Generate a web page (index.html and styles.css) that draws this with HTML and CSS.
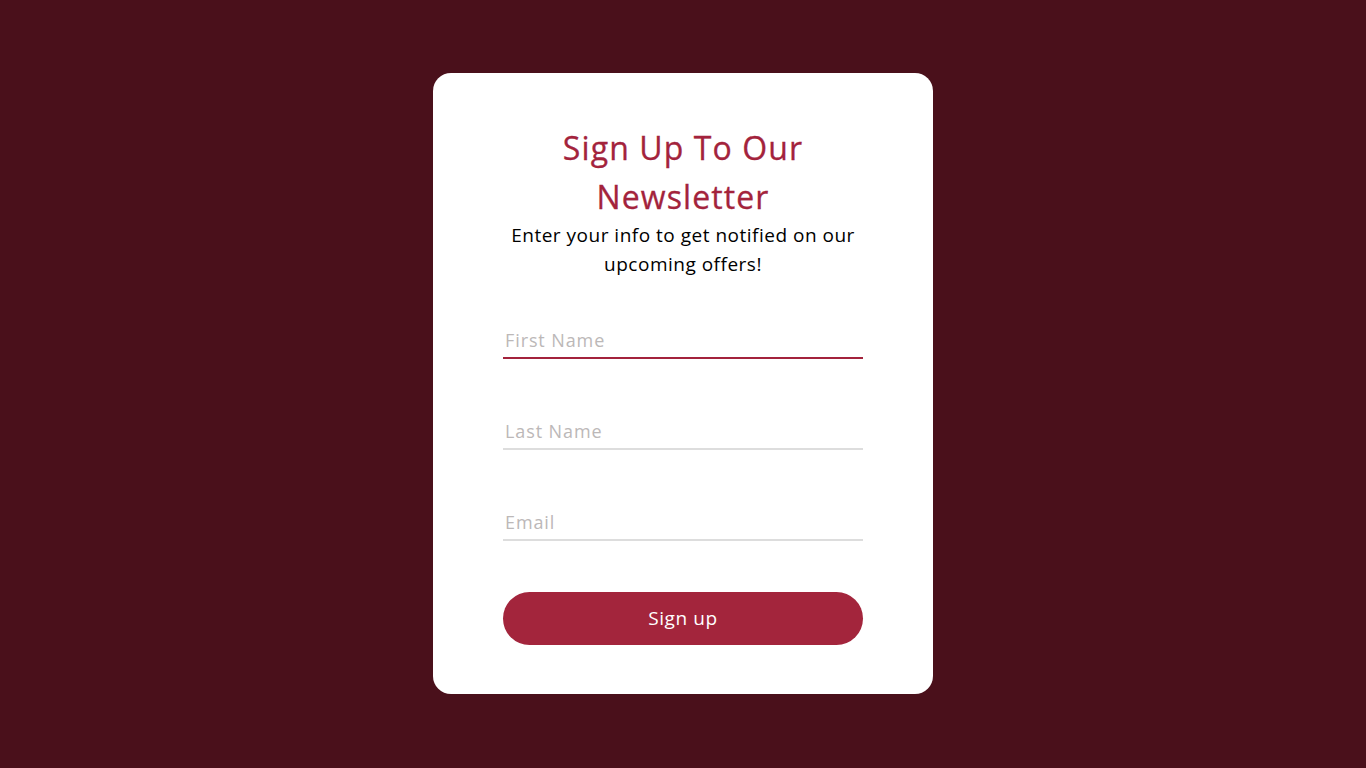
FILE: index.html
```html
<!DOCTYPE html>
<html lang="en">
<head>
	<meta charset="UTF-8">
	<title>Newsletter</title>
	<link rel="stylesheet" href="styles.css">
</head>
<body>
    <div class="card">
        <h1 class="title">Sign Up To Our<br>Newsletter</h1>
        <p class="sub">Enter your info to get notified on our<br>upcoming offers!</p>
        <form class="form">
            <input class="field active" type="text" placeholder="First Name">
            <input class="field" type="text" placeholder="Last Name">
            <input class="field" type="email" placeholder="Email">
            <button class="btn" type="button">Sign up</button>
        </form>
    </div>
</body>
</html>
```

FILE: styles.css
```css
*{
    margin: 0px;
    padding: 0px;
    box-sizing: border-box;
}
html{height:100%;}
body{
    width: 100%;
    height: 100%;
    background: #4a101b;
    font-family: "Open Sans", "DejaVu Sans", sans-serif;
    display: flex;
    justify-content: center;
    align-items: flex-start;
    padding-top: 73px;
}
.card{
    width: 500px;
    background: #fff;
    border-radius: 18px;
    padding: 50px 70px 49px;
    text-align: center;
}
.title{
    color: #a3233c;
    font-size: 32px;
    font-weight: 500;
    line-height: 49px;
    letter-spacing: 1.1px;
    -webkit-text-stroke: 0.3px #a3233c;
}
.sub{
    color: #000;
    font-size: 19px;
    line-height: 29px;
    letter-spacing: 0.5px;
}
.form{
    margin-top: 38px;
    display: flex;
    flex-direction: column;
    gap: 49px;
}
.field{
    width: 100%;
    border: none;
    border-bottom: 2px solid #dddddd;
    outline: none;
    font-family: inherit;
    font-size: 18px;
    line-height: 24px;
    letter-spacing: 0.9px;
    padding: 11px 2px 5px;
    color: #333;
}
.field::placeholder{
    color: #bcb8b8;
}
.field.active{
    border-bottom-color: #a3233c;
}
.btn{
    margin-top: 2px;
    height: 53px;
    border: none;
    border-radius: 27px;
    background: #a3253c;
    color: #fff;
    font-family: inherit;
    font-size: 19px;
    letter-spacing: 0.6px;
    padding-bottom: 2px;
}
```
